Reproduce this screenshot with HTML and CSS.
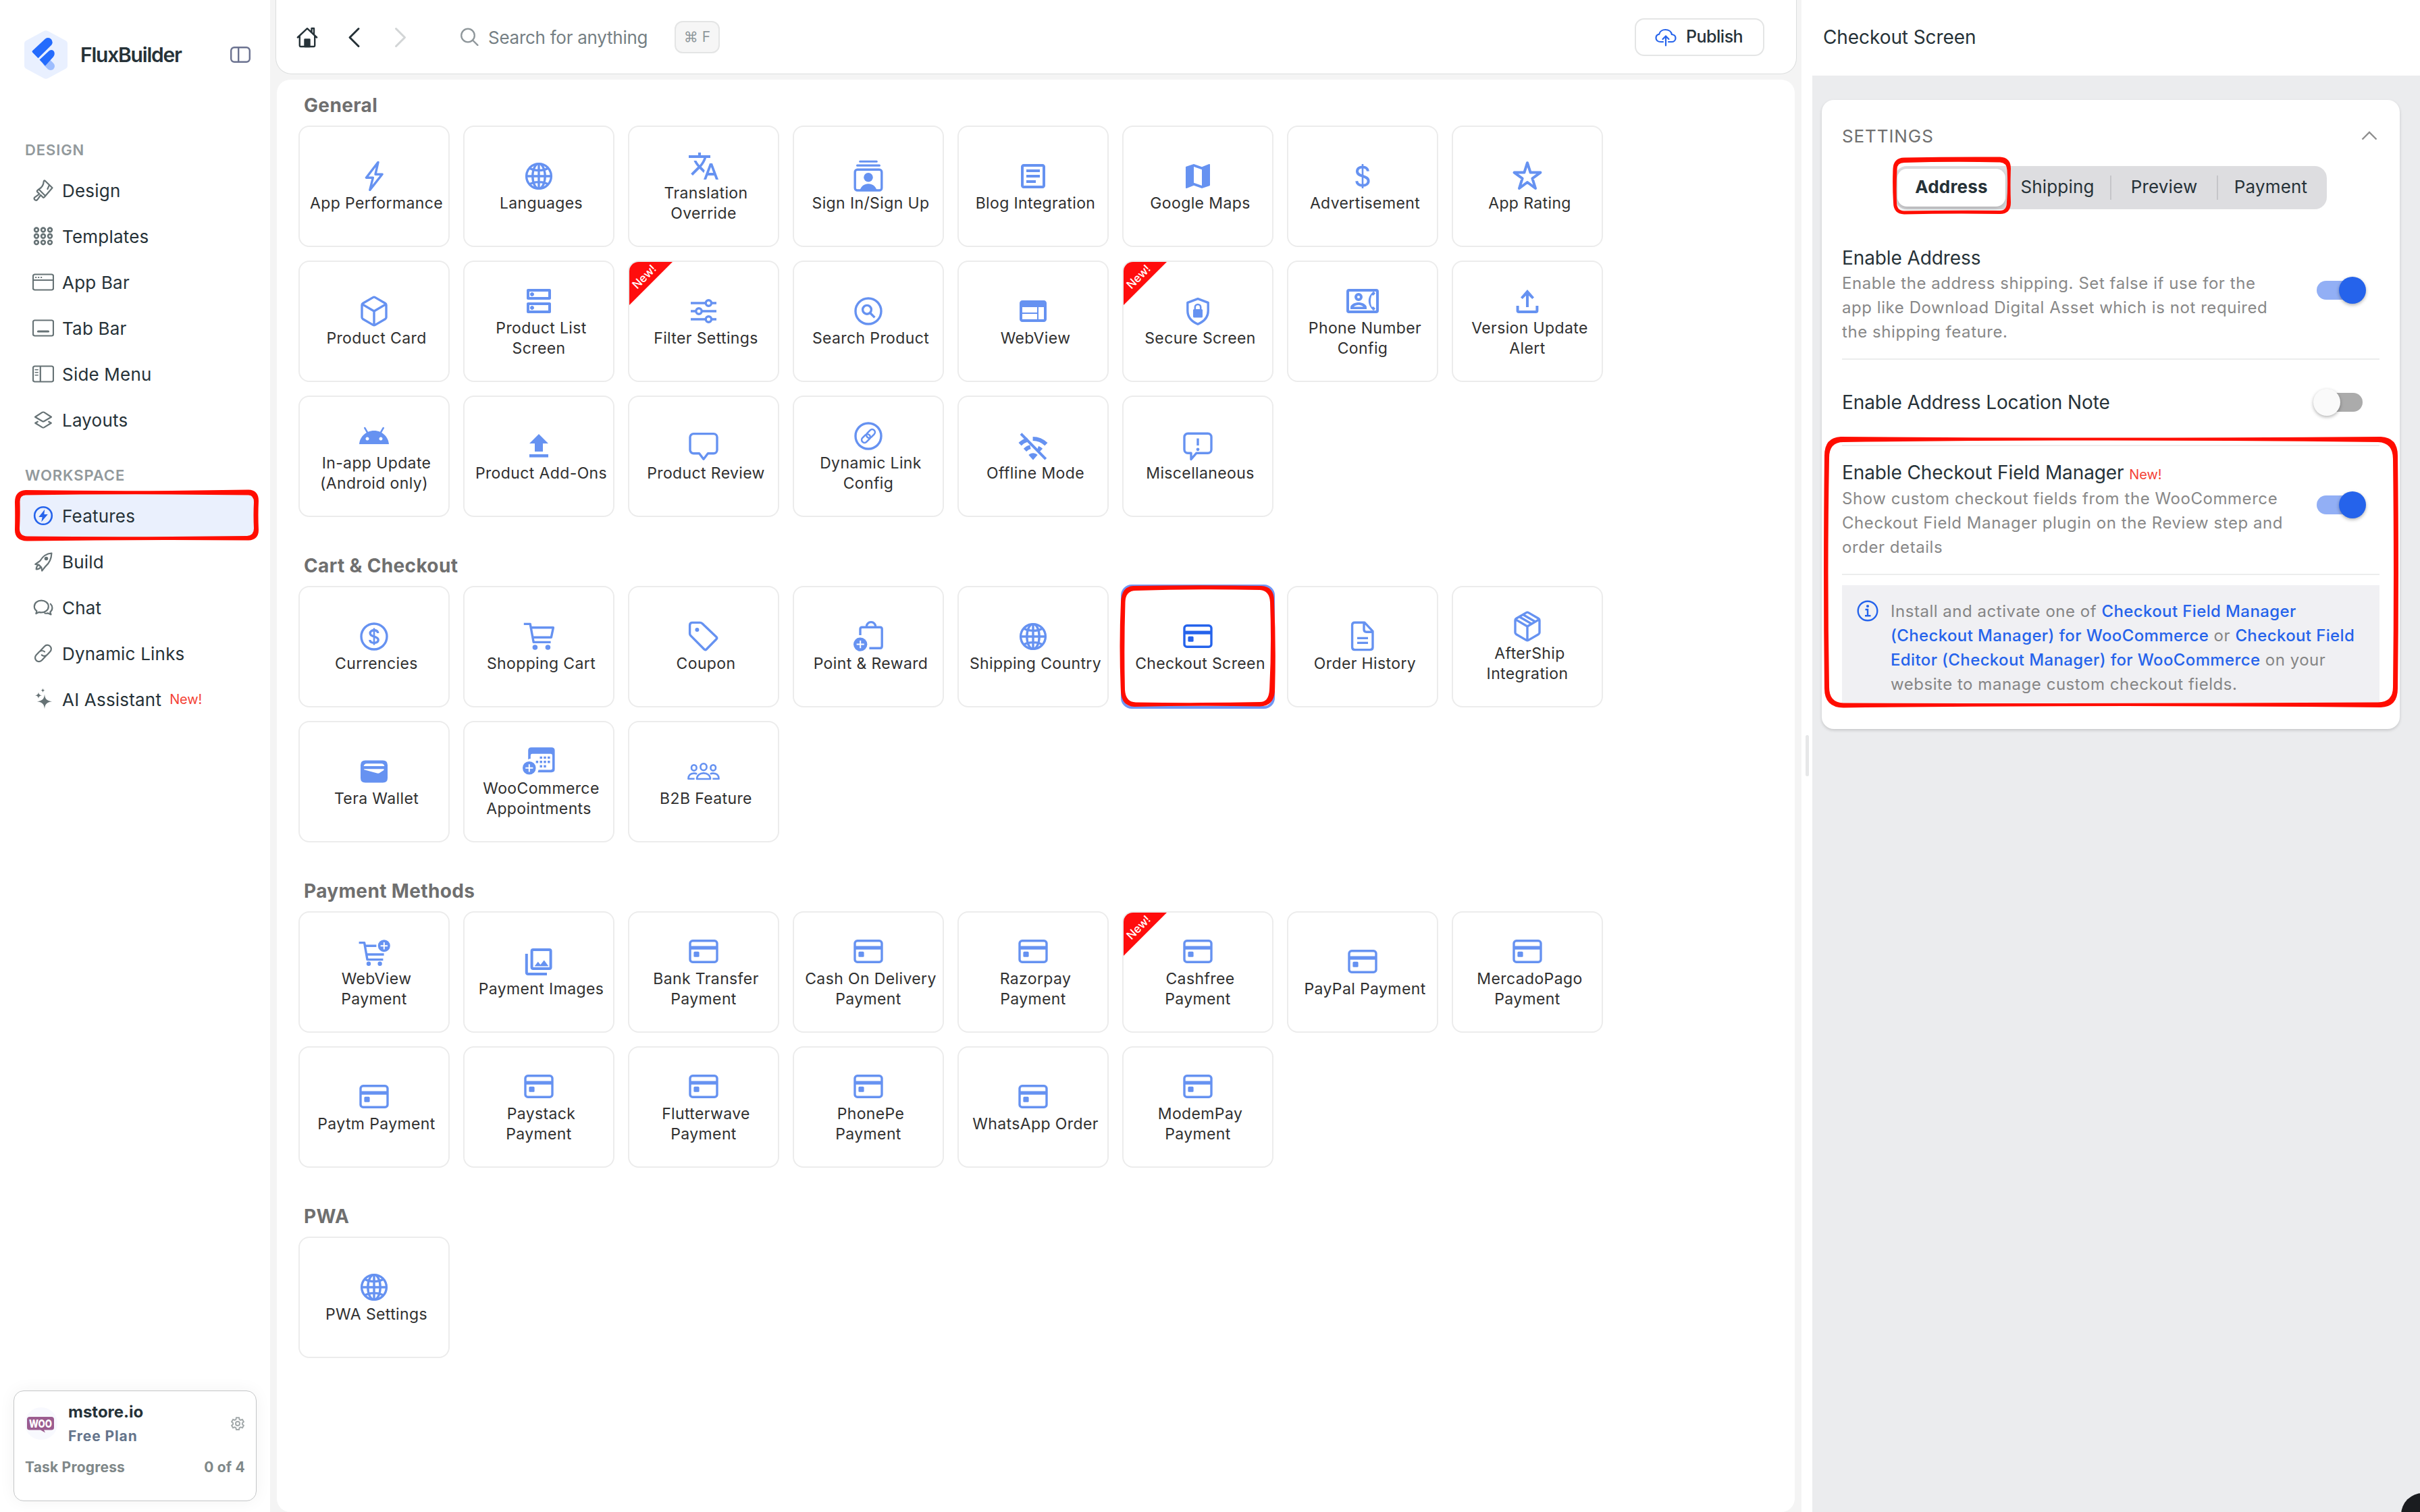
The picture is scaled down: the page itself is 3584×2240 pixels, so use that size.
FILE: index.html
```
<!DOCTYPE html>
<html lang="en">
  <head>
    <meta charset="UTF-8" />
    <meta name="viewport" content="width=device-width, initial-scale=1.0" />
    <title>FluxBuilder</title>
    <link rel="stylesheet" href="styles.css">
  </head>

  <body>
    <!-- icon sprite -->
    <svg width="0" height="0" class="sprite">
      <symbol id="flash" viewBox="0 0 24 24"><path class="s" d="M15 1.7 6.2 13.1h5L8.9 22.2 18 10.6h-5z"/></symbol>
      <symbol id="globe" viewBox="0 0 24 24"><g class="s"><circle cx="12" cy="12" r="9.2"/><ellipse cx="12" cy="12" rx="4.6" ry="9.2"/><path d="M12 2.8v18.4M2.8 12h18.4M5.2 6.1c3.8 2.1 9.8 2.1 13.6 0M5.2 17.9c3.8-2.1 9.8-2.1 13.6 0"/></g></symbol>
      <symbol id="translate" viewBox="0 0 24 24"><path d="M12.87 15.07l-2.54-2.51.03-.03C12.1 10.59 13.34 8.36 14.07 6H17V4h-7V2H8v2H1v2h11.17C11.5 7.92 10.44 9.75 9 11.35 8.07 10.32 7.3 9.19 6.69 8h-2c.73 1.63 1.73 3.17 2.98 4.56l-5.09 5.02L4 19l5-5 3.11 3.11.76-2.04M18.5 10h-2L12 22h2l1.12-3h4.75L21 22h2l-4.5-12m-2.62 7l1.62-4.33L19.12 17h-3.24z"/></symbol>
      <symbol id="signin" viewBox="0 0 24 24"><path d="M6.2.4h11.6a.6.6 0 0 1 .6 1.5H5.6a.6.6 0 0 1 .6-1.5zM4.2 3.3h15.6a.6.6 0 0 1 .6 1.6H3.6a.6.6 0 0 1 .6-1.6z"/><rect class="s" x="2.1" y="7.1" width="19.8" height="15.4" rx="1.8"/><circle cx="12" cy="12.9" r="3.4"/><path d="M5.7 22.6c.8-3.3 3.4-5 6.3-5s5.5 1.7 6.3 5z"/></symbol>
      <symbol id="article" viewBox="0 0 24 24"><path d="M19 5v14H5V5h14m0-2H5c-1.1 0-2 .9-2 2v14c0 1.1.9 2 2 2h14c1.1 0 2-.9 2-2V5c0-1.1-.9-2-2-2zM14 17H7v-2h7v2zm3-4H7v-2h10v2zm0-4H7V7h10v2z"/></symbol>
      <symbol id="map" viewBox="0 0 24 24"><path fill-rule="evenodd" d="M15 19l-6-2.11V5l6 2.11M20.5 3h-.16L15 5.1 9 3 3.36 4.9c-.21.07-.36.25-.36.48V20.5a.5.5 0 0 0 .66.47L9 18.9l6 2.1 5.64-1.9c.21-.1.36-.25.36-.48V3.5a.5.5 0 0 0-.5-.5z"/></symbol>
      <symbol id="dollar" viewBox="0 0 24 24"><path class="s s2" d="M16 8.3c-.2-2-1.8-3.1-4-3.1-2.3 0-4 1.2-4 3.2 0 4.5 8.3 2.6 8.3 7.2 0 2-1.8 3.3-4.3 3.3-2.4 0-4.2-1.2-4.4-3.3"/><path class="s s1" d="M12 3v18"/></symbol>
      <symbol id="star" viewBox="0 0 24 24"><path class="s s2" d="M12 2.1l2.3 7.2h7.4l-6 4.4 2.3 7.3-6-4.5L6 21l2.3-7.3-6-4.4h7.4z"/></symbol>
      <symbol id="cube" viewBox="0 0 24 24"><path class="s" d="M11.2 1.8a1.6 1.6 0 0 1 1.6 0l7.4 4.3a1.6 1.6 0 0 1 .8 1.4v9a1.6 1.6 0 0 1-.8 1.4l-7.4 4.3a1.6 1.6 0 0 1-1.6 0l-7.4-4.3a1.6 1.6 0 0 1-.8-1.4v-9a1.6 1.6 0 0 1 .8-1.4zM3.2 6.8 12 12l8.8-5.2M12 12v10.2"/></symbol>
      <symbol id="list" viewBox="0 0 24 24"><path d="M19 15v4H5v-4h14m1-2H4c-.55 0-1 .45-1 1v6c0 .55.45 1 1 1h16c.55 0 1-.45 1-1v-6c0-.55-.45-1-1-1zM7 18.5c-.82 0-1.5-.67-1.5-1.5s.68-1.5 1.5-1.5 1.5.67 1.5 1.5-.67 1.5-1.5 1.5zM19 5v4H5V5h14m1-2H4c-.55 0-1 .45-1 1v6c0 .55.45 1 1 1h16c.55 0 1-.45 1-1V4c0-.55-.45-1-1-1zM7 8.5c-.82 0-1.5-.67-1.5-1.5S6.18 5.5 7 5.5s1.5.68 1.5 1.5S7.83 8.5 7 8.5z"/></symbol>
      <symbol id="sliders" viewBox="0 0 24 24"><path class="s" d="M2.5 6h10.7M18.2 6h3.3M2.5 12H6M11 12h10.5M2.5 18h10.7M18.2 18h3.3"/><g class="s"><circle cx="15.7" cy="6" r="2.1"/><circle cx="8.5" cy="12" r="2.1"/><circle cx="15.7" cy="18" r="2.1"/></g></symbol>
      <symbol id="find" viewBox="0 0 24 24"><circle class="s" cx="12" cy="12" r="9.5"/><circle class="s" cx="11" cy="10.9" r="3.2"/><path class="s" d="M13.4 13.4l3.3 3.3"/></symbol>
      <symbol id="web" viewBox="0 0 24 24"><path d="M20 4H4c-1.1 0-1.99.9-1.99 2L2 18c0 1.1.9 2 2 2h16c1.1 0 2-.9 2-2V6c0-1.1-.9-2-2-2zm-5 14H4v-4h11v4zm0-5H4V9h11v4zm5 5h-4V9h4v9z"/></symbol>
      <symbol id="shield" viewBox="0 0 24 24"><path class="s" d="M12 2.8l7.6 2.9v6c0 4.7-3.2 8-7.6 9.9-4.4-1.9-7.6-5.2-7.6-9.9v-6z"/><rect x="8.5" y="10.5" width="7" height="6.3" rx=".8"/><path class="s s1" d="M9.9 11V9.1a2.1 2.1 0 0 1 4.2 0V11"/></symbol>
      <symbol id="contact" viewBox="0 0 24 24"><rect class="s s2" x="1" y="4" width="22" height="16" rx=".9"/><circle class="s s2" cx="9" cy="9" r="2"/><path fill-rule="evenodd" d="M3 18v-1.4C3 14.3 6.8 13 9 13s6 1.3 6 3.6V18zM5.5 16.2h7c-.8-.8-2.3-1.3-3.5-1.3s-2.7.5-3.5 1.3zM20.3 7.7l1.2-1.6L20 4.9c-2.3 2-3.6 4.4-3.6 7s1.3 5.1 3.6 7.1l1.5-1.2-1.2-1.6h-1.6c-1-2.7-1-5.5 0-8.4z"/></symbol>
      <symbol id="upload" viewBox="0 0 24 24"><path class="s s2" d="M12 16.5V5M4.8 15.5v3.6q0 .9.9.9h12.6q.9 0 .9-.9v-3.6"/><path d="M12 3.5l5 5.7-1.4 1.3L12 7l-3.6 3.5L7 9.2z"/></symbol>
      <symbol id="android" viewBox="0 0 24 24"><path d="M17.6 9.48l1.84-3.18c.16-.31.04-.69-.26-.85-.29-.15-.65-.06-.83.22l-1.88 3.24c-2.86-1.21-6.08-1.21-8.94 0L5.65 5.67c-.19-.29-.58-.38-.87-.2-.28.18-.37.54-.22.83L6.4 9.48C3.3 11.25 1.28 14.44 1 18h22c-.28-3.56-2.3-6.75-5.4-8.52zM7 15.25c-.69 0-1.25-.56-1.25-1.25s.56-1.25 1.25-1.25 1.25.56 1.25 1.25-.56 1.25-1.25 1.25zm10 0c-.69 0-1.25-.56-1.25-1.25s.56-1.25 1.25-1.25 1.25.56 1.25 1.25-.56 1.25-1.25 1.25z"/></symbol>
      <symbol id="addons" viewBox="0 0 24 24"><path d="M9 16h6v-6h4l-7-7-7 7h4v6zm-4 2h14v2.2H5V18z"/></symbol>
      <symbol id="bubble" viewBox="0 0 24 24"><path class="s" d="M4.6 2.8h14.8A2.6 2.6 0 0 1 22 5.4v9.4a2.6 2.6 0 0 1-2.6 2.6h-4.2L12 21.6l-3.2-4.2H4.6A2.6 2.6 0 0 1 2 14.8V5.4a2.6 2.6 0 0 1 2.6-2.6z"/></symbol>
      <symbol id="dynlink" viewBox="0 0 24 24"><circle class="s" cx="12" cy="12" r="9.5"/><g class="s s1" transform="rotate(-45 12 12)"><rect x="5.9" y="9.9" width="7.2" height="4.2" rx="2.1"/><rect x="10.9" y="9.9" width="7.2" height="4.2" rx="2.1"/></g></symbol>
      <symbol id="offline" viewBox="0 0 24 24"><path class="s s3" d="M2.3 10.6C4 8.9 6 7.8 8 7.2M11.8 6.5c3.8 0 7.2 1.5 9.9 4.1M6 14.9c1.2-1.2 2.5-2 4-2.3M15.5 13.3c1 .4 1.8.9 2.5 1.6"/><path d="M12 22.3l-3.3-3.8c1.9-1.8 4.7-1.8 6.6 0z"/><path class="s s2" d="M3 2.8l18.4 18.8"/></symbol>
      <symbol id="alert" viewBox="0 0 24 24"><path class="s" d="M4.6 2.6h14.8A2.6 2.6 0 0 1 22 5.2v9.3a2.6 2.6 0 0 1-2.6 2.6H11l-4 4.6v-4.6H4.6A2.6 2.6 0 0 1 2 14.5V5.2a2.6 2.6 0 0 1 2.6-2.6z"/><path class="s" d="M12 6.2v5.3"/><circle cx="12" cy="14.4" r="1.2"/></symbol>
      <symbol id="coin" viewBox="0 0 24 24"><circle class="s" cx="12" cy="12" r="9.5"/><path class="s" d="M14.9 9.5c-.1-1.4-1.3-2.1-2.9-2.1s-2.9.8-2.9 2.2c0 3.2 6 1.7 6 4.9 0 1.4-1.4 2.2-3.1 2.2s-3-.7-3.1-2.2"/><path class="s s1" d="M12 5.8v12.4"/></symbol>
      <symbol id="cart" viewBox="0 0 24 24"><path class="s" d="M.9 2.7h4.7l2.5 13.5h12.7M6.2 5.4h16.5l-1.5 7.2H7.5"/><circle cx="9.2" cy="20" r="1.9"/><circle cx="18.7" cy="20" r="1.9"/></symbol>
      <symbol id="tag" viewBox="0 0 24 24"><path class="s" d="M3.7 1.7h5.7q.9 0 1.5.6l10.5 9.9q.9.9 0 1.8l-7.2 7.4q-.9.9-1.8 0L2.4 11.3q-.6-.6-.6-1.5V3.6q0-1.9 1.9-1.9z"/><circle cx="7.2" cy="7" r="1.5"/></symbol>
      <symbol id="bag" viewBox="0 0 24 24"><path class="s" d="M6 11V6.5Q6 5.1 7.4 5.1h13.3q1.4 0 1.4 1.4v12.6q0 1.5-1.4 1.5h-8M10.6 5V4.7a3.4 3.4 0 0 1 6.8 0V5"/><circle cx="6.1" cy="17.8" r="5.1"/><path stroke="#fff" stroke-width="1" d="M6.1 15v5.6M3.3 17.8h5.6"/></symbol>
      <symbol id="card" viewBox="0 0 24 24"><rect class="s" x="2" y="3.9" width="20" height="15.7" rx="1.9"/><path d="M1.8 7.7h20.4v2.7H1.8z"/><rect x="4.7" y="11.9" width="4.1" height="4" rx=".8"/></symbol>
      <symbol id="doc" viewBox="0 0 24 24"><path class="s" d="M6.2 1.6h7.2l6.1 6.5v11.8q0 1.9-1.9 1.9H6.2q-1.9 0-1.9-1.9V3.5q0-1.9 1.9-1.9zM13 1.8v5q0 1.8 1.8 1.8h4.7M8 13.2h8M8 16.7h8"/></symbol>
      <symbol id="parcel" viewBox="0 0 24 24"><path class="s" d="M11.2 1.8a1.6 1.6 0 0 1 1.6 0l7.4 4.3a1.6 1.6 0 0 1 .8 1.4v9a1.6 1.6 0 0 1-.8 1.4l-7.4 4.3a1.6 1.6 0 0 1-1.6 0l-7.4-4.3a1.6 1.6 0 0 1-.8-1.4v-9a1.6 1.6 0 0 1 .8-1.4zM3.2 6.8 12 12l8.8-5.2M12 12v10.2M6.3 5l9 5.2M9 3.4l9 5.2"/></symbol>
      <symbol id="wallet" viewBox="0 0 24 24"><path fill-rule="evenodd" d="M5.5 3.7h13q3.5 0 3.5 3.5v9.6q0 3.5-3.5 3.5h-13Q2 20.3 2 16.8V7.2q0-3.5 3.5-3.5zM4.3 8h15.4q-.4-1.9-2.3-1.9H6.6Q4.7 6.1 4.3 8zM4.6 10.6l8.7 2.4q2 .8 3-.1l2.9-1.9.1-.9H4.6z"/></symbol>
      <symbol id="calendar" viewBox="0 0 24 24"><path fill-rule="evenodd" d="M6.4 1.6h15q2.4 0 2.4 2.3v13.9q0 2.3-2.4 2.3H11.2l.6-1.8h9q1.2 0 1.2-1.2V7.6q0-1.2-1.2-1.2H7.1q-1.2 0-1.2 1.2V10q-1 0-1.8.6V3.9q0-2.3 2.3-2.3z"/><path class="dots" d="M13.6 9.2h.01M16.5 9.2h.01M19.4 9.2h.01M10.7 12.4h.01M13.6 12.4h.01M16.5 12.4h.01M19.4 12.4h.01M13.6 15.6h.01M16.5 15.6h.01"/><circle cx="4.9" cy="16.9" r="4.9"/><path stroke="#fff" stroke-width="1" d="M4.9 14.1v5.6M2.1 16.9h5.6"/></symbol>
      <symbol id="people" viewBox="0 0 24 24"><g class="s s1"><ellipse cx="12" cy="8.6" rx="2.3" ry="2.5"/><ellipse cx="4.9" cy="9.2" rx="1.9" ry="2.1"/><ellipse cx="19.1" cy="9.2" rx="1.9" ry="2.1"/><path d="M7 17.5c0-2.7 2.2-4.3 5-4.3s5 1.6 5 4.3zM5.3 17.4H.7c0-2.6 1.6-4.1 4.2-4.1.9 0 1.6.2 2.2.5M18.7 17.4h4.6c0-2.6-1.6-4.1-4.2-4.1-.9 0-1.6.2-2.2.5"/></g></symbol>
      <symbol id="cartplus" viewBox="0 0 24 24"><path class="s" d="M.8 5.3h4l2.2 12.5h11.7M5.4 7.6h8.3M6.5 14h12.8"/><circle cx="8" cy="20.9" r="1.6"/><circle cx="16.3" cy="20.9" r="1.6"/><circle cx="19.4" cy="7.6" r="4.5"/><path stroke="#fff" stroke-width="1" d="M19.4 5v5.2M16.8 7.6H22"/></symbol>
      <symbol id="images" viewBox="0 0 24 24"><rect class="s s2" x="6.8" y="3" width="14" height="14" rx="1"/><path class="s s2" d="M2.9 6v13.8q0 1.2 1.2 1.2H18"/><path d="M8.8 15.2l2.6-3.3 1.8 2.2 2.7-3.4 3.3 4.5z"/></symbol>

      <symbol id="brush" viewBox="0 0 32 32"><path class="n" d="M18.6 1.7 29.5 12.3 19.2 24.2 9.5 14.5c4.2-2.6 7-6.7 7.2-11.4q.2-2.3 1.9-1.4zM9.4 14.4l-2.2 2q-.8 1 .2 2l3 2.9-7 5q-1.6 1.7 0 3.6 2 1.7 3.9 0l5-6.9 3.2 3.2q1 1 1.9.1l1.9-2.1M22.4 14l2.4-5.4"/></symbol>
      <symbol id="grid9" viewBox="0 0 32 32"><g class="n n2"><circle cx="6" cy="6.5" r="2.9"/><circle cx="16" cy="6.5" r="2.9"/><circle cx="26" cy="6.5" r="2.9"/><circle cx="6" cy="15.8" r="2.9"/><circle cx="16" cy="15.8" r="2.9"/><circle cx="26" cy="15.8" r="2.9"/><circle cx="6" cy="25.1" r="2.9"/><circle cx="16" cy="25.1" r="2.9"/><circle cx="26" cy="25.1" r="2.9"/></g></symbol>
      <symbol id="appbar" viewBox="0 0 32 32"><path class="n" d="M3.5 4.5h25A2.5 2.5 0 0 1 31 7v18a2.5 2.5 0 0 1-2.5 2.5h-25A2.5 2.5 0 0 1 1 25V7a2.5 2.5 0 0 1 2.5-2.5zM1 13h30"/><path d="M4.2 7.9h2v2h-2zM8.2 7.9h2v2h-2zM12.2 7.9h2v2h-2z"/></symbol>
      <symbol id="tabbar" viewBox="0 0 32 32"><rect class="n" x="1" y="4.5" width="30" height="23" rx="2.5"/><path class="n n3" d="M8.5 21h15"/></symbol>
      <symbol id="sidemenu" viewBox="0 0 32 32"><path class="n" d="M3.5 4.5h25A2.5 2.5 0 0 1 31 7v18a2.5 2.5 0 0 1-2.5 2.5h-25A2.5 2.5 0 0 1 1 25V7a2.5 2.5 0 0 1 2.5-2.5zM11.8 4.5v23"/><path class="n n1" d="M4.2 9.7h4M4.2 13.7h4M4.2 17.7h4"/></symbol>
      <symbol id="layers" viewBox="0 0 32 32"><path class="n" d="M14.6 4.9q1.4-.8 2.8 0L28 11.7 17.4 18q-1.4.8-2.8 0L4 11.7zM7.8 18.7 4.2 20.8l10.4 6.3q1.4.8 2.8 0l10.4-6.3-3.6-2.1"/></symbol>
      <symbol id="bolt" viewBox="0 0 32 32"><circle class="n n2" cx="16" cy="16" r="12.8"/><path d="M18.2 6.8 9.3 18h5.3l-1.3 7.3L22.8 14h-5.4z"/></symbol>
      <symbol id="rocket" viewBox="0 0 32 32"><path class="n" d="M28.4 3.5c-7.7.6-13.3 5-17 11.3L4.3 20l5 .6 4 4 .9 5 5.4-6.8c5.4-4.6 8.5-10.8 8.8-19.3zM9.4 20.8q-3.4 1.6-3.7 6.6 4.7-.3 6.7-3.3"/><circle cx="20.5" cy="11.5" r="2.8"/></symbol>
      <symbol id="chat" viewBox="0 0 32 32"><path class="n" d="M13.2 5.6c5.8 0 10.6 3.8 10.6 8.9s-4.8 8.9-10.6 8.9c-1.3 0-2.6-.2-3.7-.5L5.4 25l1-3.8C4.2 19.6 2.8 17.2 2.8 14.5c0-5.1 4.6-8.9 10.4-8.9zM26.8 10.7c1.7 1.5 2.6 3.6 2.6 5.9 0 2.5-1.2 4.7-3.1 6.2l1.2 3.6-4.3-2c-1.5.4-3.2.5-4.8.1"/></symbol>
      <symbol id="chain" viewBox="0 0 32 32"><g class="n" transform="rotate(-47 16 16)"><path d="M17 21.5H7a5.7 5.7 0 0 1 0-11.4h6.5a5.7 5.7 0 0 1 5.7 5.7M15 10.3h10a5.7 5.7 0 0 1 0 11.4h-6.5a5.7 5.7 0 0 1-5.7-5.7"/></g></symbol>
      <symbol id="sparkle" viewBox="0 0 32 32"><path d="M18 8.5c.8 7 2.6 9.3 11 10.8-8.4 1.5-10.2 3.9-11 10.9-.8-7-2.6-9.4-11-10.9 8.4-1.5 10.2-3.8 11-10.8zM9 5.5c.5 3.2 1.5 4.2 5 4.7-3.5.5-4.5 1.6-5 4.8-.5-3.2-1.5-4.3-5-4.8 3.5-.5 4.5-1.5 5-4.7zM15.5-.5c.3 2.2 1 2.9 3.3 3.2-2.3.4-3 1-3.3 3.2-.4-2.2-1-2.8-3.3-3.2 2.3-.3 2.9-1 3.3-3.2z"/></symbol>
    </svg>

    <aside class="sidebar">
      <div class="brand">
        <svg class="logo" viewBox="0 0 64 72">
          <path fill="#e9f0ff" d="M28.5 1.2q3.5-2 7 0L61 15q3 1.6 3 5v32q0 3.4-3 5L35.5 70.8q-3.5 2-7 0L3 57q-3-1.6-3-5V20q0-3.4 3-5z"/>
          <path stroke="#9dbdff" stroke-width="12" stroke-linecap="round" d="M33 47l6 6"/>
          <path fill="#246bfd" d="M12 32.5q-1-1.2 0-2.2L31 12.5q5-3.3 9 .8 3.2 4.5.2 8.5L20.5 41.3zM22.5 43.5l14.5-13.5q4.5-2.3 7 1.2 2 4-1 8L31 52.5z"/>
        </svg>
        <span class="brand-name">FluxBuilder</span>
        <svg class="collapse" viewBox="0 0 30 24"><path d="M6 1.2h18A4.8 4.8 0 0 1 28.8 6v12a4.8 4.8 0 0 1-4.8 4.8H6A4.8 4.8 0 0 1 1.2 18V6A4.8 4.8 0 0 1 6 1.2zM12.2 1.2v21.6"/></svg>
      </div>

      <div class="nav-title">DESIGN</div>
      <a class="nav-item"><svg><use href="#brush"/></svg>Design</a>
      <a class="nav-item"><svg><use href="#grid9"/></svg>Templates</a>
      <a class="nav-item"><svg><use href="#appbar"/></svg>App Bar</a>
      <a class="nav-item"><svg><use href="#tabbar"/></svg>Tab Bar</a>
      <a class="nav-item"><svg><use href="#sidemenu"/></svg>Side Menu</a>
      <a class="nav-item"><svg><use href="#layers"/></svg>Layouts</a>

      <div class="nav-title workspace">WORKSPACE</div>
      <a class="nav-item active"><svg><use href="#bolt"/></svg>Features</a>
      <a class="nav-item"><svg><use href="#rocket"/></svg>Build</a>
      <a class="nav-item"><svg><use href="#chat"/></svg>Chat</a>
      <a class="nav-item"><svg><use href="#chain"/></svg>Dynamic Links</a>
      <a class="nav-item"><svg><use href="#sparkle"/></svg>AI Assistant <span class="new">New!</span></a>

      <div class="site-card">
        <div class="site-row">
          <div class="site-logo">
            <svg viewBox="0 0 40 24"><path fill="#9b5c8f" d="M4 0h32q4 0 4 4v12q0 3.5-4 3.5H25l2 4-7-4H4q-4 0-4-3.5V4q0-4 4-4z"/><text x="20" y="15.6" text-anchor="middle" textLength="34" lengthAdjust="spacingAndGlyphs">WOO</text></svg>
          </div>
          <div class="site-info">
            <div class="site-name">mstore.io</div>
            <div class="site-plan">Free Plan</div>
          </div>
          <svg class="gear" viewBox="0 0 20 20"><path d="M8 1.2h4l.6 2.6 1.7 1 2.6-.8 2 3.4-2 1.8v1.8l2 1.8-2 3.4-2.6-.8-1.7 1-.6 2.5H8l-.6-2.5-1.7-1-2.6.8-2-3.4 2-1.8V9.2l-2-1.8 2-3.4 2.6.8 1.7-1z"/><circle cx="10" cy="10" r="3"/></svg>
        </div>
        <div class="site-progress"><span>Task Progress</span><span>0 of 4</span></div>
      </div>
    </aside>

    <main class="main">
      <header class="toolbar">
        <svg class="tool home" viewBox="0 0 32 32"><path d="M1.8 16.5 16 3.2l14.2 13.3M4.8 14v14.3q0 1.7 1.7 1.7h19q1.7 0 1.7-1.7V14M22.5 8.5V3H26v9"/><path class="door" d="M12.5 30V19.5h7V30z"/></svg>
        <svg class="tool" viewBox="0 0 32 32"><path d="M23 3.5 10 16.5 23 29.5"/></svg>
        <svg class="tool off" viewBox="0 0 32 32"><path d="M9.5 3.5l13 13-13 13"/></svg>
        <svg class="search-icon" viewBox="0 0 28 28"><circle cx="12" cy="11.5" r="9.8"/><path d="M19.2 18.7l7.2 7.2"/></svg>
        <span class="search-text">Search for anything</span>
        <kbd>⌘ F</kbd>
        <button class="publish">
          <svg viewBox="0 0 32 28"><path d="M12 20H8.5C4.5 20 1.5 17.7 1.5 14.2c0-3 2-5 4.7-5.6C7 4.7 10.8 2 15.5 2c4.8 0 8.6 2.7 9.4 7 3.3.3 5.6 2.4 5.6 5.4 0 3.3-2.6 5.6-6 5.6H20M16 25.5V12M11.5 16l4.5-4.5 4.5 4.5"/></svg>
          Publish
        </button>
      </header>

      <div class="panel">
        <section>
          <h2>General</h2>
          <div class="grid">
            <div class="card"><svg><use href="#flash"/></svg><p>App Performance</p></div>
            <div class="card"><svg><use href="#globe"/></svg><p>Languages</p></div>
            <div class="card"><svg><use href="#translate"/></svg><p>Translation<br>Override</p></div>
            <div class="card"><svg><use href="#signin"/></svg><p>Sign In/Sign Up</p></div>
            <div class="card"><svg><use href="#article"/></svg><p>Blog Integration</p></div>
            <div class="card"><svg><use href="#map"/></svg><p>Google Maps</p></div>
            <div class="card"><svg><use href="#dollar"/></svg><p>Advertisement</p></div>
            <div class="card"><svg><use href="#star"/></svg><p>App Rating</p></div>
            <div class="card"><svg><use href="#cube"/></svg><p>Product Card</p></div>
            <div class="card"><svg><use href="#list"/></svg><p>Product List<br>Screen</p></div>
            <div class="card"><div class="ribbon"><span>New!</span></div><svg><use href="#sliders"/></svg><p>Filter Settings</p></div>
            <div class="card"><svg><use href="#find"/></svg><p>Search Product</p></div>
            <div class="card"><svg><use href="#web"/></svg><p>WebView</p></div>
            <div class="card"><div class="ribbon"><span>New!</span></div><svg><use href="#shield"/></svg><p>Secure Screen</p></div>
            <div class="card"><svg><use href="#contact"/></svg><p>Phone Number<br>Config</p></div>
            <div class="card"><svg><use href="#upload"/></svg><p>Version Update<br>Alert</p></div>
            <div class="card"><svg><use href="#android"/></svg><p>In-app Update<br>(Android only)</p></div>
            <div class="card"><svg><use href="#addons"/></svg><p>Product Add-Ons</p></div>
            <div class="card"><svg><use href="#bubble"/></svg><p>Product Review</p></div>
            <div class="card"><svg><use href="#dynlink"/></svg><p>Dynamic Link<br>Config</p></div>
            <div class="card"><svg><use href="#offline"/></svg><p>Offline Mode</p></div>
            <div class="card"><svg><use href="#alert"/></svg><p>Miscellaneous</p></div>
          </div>
        </section>

        <section>
          <h2>Cart &amp; Checkout</h2>
          <div class="grid">
            <div class="card"><svg><use href="#coin"/></svg><p>Currencies</p></div>
            <div class="card"><svg><use href="#cart"/></svg><p>Shopping Cart</p></div>
            <div class="card"><svg><use href="#tag"/></svg><p>Coupon</p></div>
            <div class="card"><svg><use href="#bag"/></svg><p>Point &amp; Reward</p></div>
            <div class="card"><svg><use href="#globe"/></svg><p>Shipping Country</p></div>
            <div class="card selected"><svg><use href="#card"/></svg><p>Checkout Screen</p></div>
            <div class="card"><svg><use href="#doc"/></svg><p>Order History</p></div>
            <div class="card"><svg><use href="#parcel"/></svg><p>AfterShip<br>Integration</p></div>
            <div class="card"><svg><use href="#wallet"/></svg><p>Tera Wallet</p></div>
            <div class="card"><svg><use href="#calendar"/></svg><p>WooCommerce<br>Appointments</p></div>
            <div class="card"><svg><use href="#people"/></svg><p>B2B Feature</p></div>
          </div>
        </section>

        <section>
          <h2>Payment Methods</h2>
          <div class="grid">
            <div class="card"><svg><use href="#cartplus"/></svg><p>WebView<br>Payment</p></div>
            <div class="card"><svg><use href="#images"/></svg><p>Payment Images</p></div>
            <div class="card"><svg><use href="#card"/></svg><p>Bank Transfer<br>Payment</p></div>
            <div class="card"><svg><use href="#card"/></svg><p>Cash On Delivery<br>Payment</p></div>
            <div class="card"><svg><use href="#card"/></svg><p>Razorpay<br>Payment</p></div>
            <div class="card"><div class="ribbon"><span>New!</span></div><svg><use href="#card"/></svg><p>Cashfree<br>Payment</p></div>
            <div class="card"><svg><use href="#card"/></svg><p>PayPal Payment</p></div>
            <div class="card"><svg><use href="#card"/></svg><p>MercadoPago<br>Payment</p></div>
            <div class="card"><svg><use href="#card"/></svg><p>Paytm Payment</p></div>
            <div class="card"><svg><use href="#card"/></svg><p>Paystack<br>Payment</p></div>
            <div class="card"><svg><use href="#card"/></svg><p>Flutterwave<br>Payment</p></div>
            <div class="card"><svg><use href="#card"/></svg><p>PhonePe<br>Payment</p></div>
            <div class="card"><svg><use href="#card"/></svg><p>WhatsApp Order</p></div>
            <div class="card"><svg><use href="#card"/></svg><p>ModemPay<br>Payment</p></div>
          </div>
        </section>

        <section>
          <h2>PWA</h2>
          <div class="grid">
            <div class="card"><svg><use href="#globe"/></svg><p>PWA Settings</p></div>
          </div>
        </section>
      </div>
    </main>

    <aside class="inspector">
      <div class="inspector-title">Checkout Screen</div>
      <div class="inspector-body">
        <div class="resizer"></div>
        <div class="inspector-content">
          <div class="settings">
            <div class="settings-head">
              <span>SETTINGS</span>
              <svg viewBox="0 0 24 14"><path d="M1.5 12.5 12 2l10.5 10.5"/></svg>
            </div>
            <div class="segmented">
              <span class="seg on">Address</span>
              <span class="seg">Shipping</span>
              <span class="seg">Preview</span>
              <span class="seg">Payment</span>
            </div>

            <div class="option first">
              <div>
                <div class="option-title">Enable Address</div>
                <div class="option-desc">Enable the address shipping. Set false if use for the<br>app like Download Digital Asset which is not required<br>the shipping feature.</div>
              </div>
              <div class="switch on"><i></i></div>
            </div>

            <div class="option single">
              <div class="option-title">Enable Address Location Note</div>
              <div class="switch"><i></i></div>
            </div>

            <div class="option">
              <div>
                <div class="option-title">Enable Checkout Field Manager <span class="new">New!</span></div>
                <div class="option-desc">Show custom checkout fields from the WooCommerce<br>Checkout Field Manager plugin on the Review step and<br>order details</div>
              </div>
              <div class="switch on"><i></i></div>
            </div>

            <div class="note">
              <svg viewBox="0 0 32 32"><circle cx="16" cy="16" r="14.3"/><path d="M12.5 14H16v9M12 23.2h8.5"/><circle class="dot" cx="16" cy="9" r="2.1"/></svg>
              <p>Install and activate one of <a>Checkout Field Manager<br>(Checkout Manager) for WooCommerce</a> or <a>Checkout Field<br>Editor (Checkout Manager) for WooCommerce</a> on your<br>website to manage custom checkout fields.</p>
            </div>
          </div>
        </div>
      </div>
    </aside>

    <div class="help"></div>

    <!-- red marker outlines -->
    <svg class="marks" viewBox="0 0 3584 2240">
      <path d="M38 726Q200 728.5 368 725.5Q383 726 383 742Q382 763 383 785Q383 800 368 800.5Q200 799 40 801.5Q22 801 22 785Q22.5 763 22 744Q22 727 38 726ZM38 733.5Q29 734 29.5 744Q30 763 29 783Q29 794 40 794.5Q200 796 366 794Q376 793 376 783Q375 763 376 744Q376 734 368 733.5Q200 731 38 733.5Z"/>
      <path d="M1678 868Q1775 866.5 1868 868Q1887 869 1887 890Q1890 957 1888 1025Q1886 1046 1866 1046.5Q1775 1045 1680 1047Q1661 1046 1660 1025Q1657 957 1660 892Q1661 869 1678 868ZM1682 875Q1667 875 1666.5 892Q1664.5 957 1666 1022Q1667 1040 1682 1040.5Q1775 1042 1866 1040Q1879 1040 1880 1022Q1883.5 957 1881 892Q1880 875 1866 874Q1775 872 1682 875Z"/>
      <path d="M2820 233.5Q2890 232 2962 232.5Q2978 233 2978 250Q2977 275 2978 300Q2978 317 2962 317Q2890 316 2820 317.5Q2804 317 2804 300Q2802.5 275 2803.5 250Q2804 234 2820 233.5ZM2820 241Q2809 241 2809.5 252Q2808 275 2809 300Q2809 312 2820 312.5Q2890 311.5 2962 312Q2972 312 2972 300Q2974 275 2972.5 252Q2972 241 2962 240.5Q2890 239 2820 241Z"/>
      <path d="M2726 647Q3120 650 3526 647Q3551 648 3551 675Q3553 850 3551 1020Q3551 1047 3526 1048Q3120 1044 2730 1048.5Q2702 1048 2702 1020Q2700 850 2702 675Q2702 648 2726 647ZM2730 655Q2709 655 2709 678Q2706 850 2709 1018Q2709 1041 2730 1041.5Q3120 1043 3522 1040.5Q3544 1040 3544 1018Q3546 850 3544 680Q3544 656 3522 655Q3120 650 2730 655Z"/>
    </svg>
  </body>
</html>
```
FILE: styles.css
```
* {
  box-sizing: border-box;
}

body {
  margin: 0;
  height: 2240px;
  display: flex;
  overflow: hidden;
  background-color: #f4f4f4;
  color: #263238;
  font-family: Inter, sans-serif;
  font-size: 26px;
}

h2,
p {
  margin: 0;
}

.sprite {
  position: absolute;
}

/* stroke styles used inside the symbols */
.s,
.n {
  fill: none;
  stroke: currentColor;
  stroke-width: 1.7;
  stroke-linejoin: round;
}

.s1 {
  stroke-width: 1.3;
}

.s2 {
  stroke-width: 2;
}

.s3 {
  stroke-width: 3;
}

.dots {
  stroke: currentColor;
  stroke-width: 1.7;
  stroke-linecap: square;
}

.n {
  stroke-width: 2.2;
  stroke-linecap: round;
}

.n1 {
  stroke-width: 1.6;
}

.n2 {
  stroke-width: 2.6;
}

.n3 {
  stroke-width: 3.2;
}

.new {
  color: #f44336;
  font-size: 20px;
  letter-spacing: -0.1px;
}

/* sidebar */
.sidebar {
  width: 400px;
  display: flex;
  flex-direction: column;
  background-color: #fff;
}

.brand {
  display: flex;
  align-items: center;
  height: 72px;
  margin: 45px 29px 90px 36px;
}

.logo {
  width: 64px;
  height: 72px;
}

.brand-name {
  margin-left: 19px;
  font-size: 30px;
  font-weight: 600;
  letter-spacing: -1.22px;
}

.collapse {
  width: 30px;
  height: 24px;
  margin-left: auto;
  fill: none;
  stroke: #6b7290;
  stroke-width: 2.4;
}

.nav-title {
  margin: 0 0 11px 37px;
  font-size: 22px;
  font-weight: 600;
  line-height: 30px;
  letter-spacing: 0.9px;
  color: #92999c;
}

.nav-title.workspace {
  margin-top: 33px;
}

.nav-item {
  display: flex;
  align-items: center;
  height: 68px;
  padding-left: 48px;
  letter-spacing: 0.2px;
}

.nav-item svg {
  width: 32px;
  height: 32px;
  margin-right: 12px;
  color: #667275;
  fill: currentColor;
  overflow: visible;
}

.nav-item .new {
  margin-left: 12px;
}

.nav-item.active {
  margin: 0 20px 0 24px;
  padding-left: 24px;
  border-radius: 14px;
  background-color: #eaf0fd;
}

.nav-item.active svg {
  color: #2563eb;
}

.site-card {
  height: 164px;
  margin: auto 20px 16px;
  padding: 17px 16px 0;
  border: 1px solid #c4c6c7;
  border-radius: 15px;
  box-shadow: 0 0 24px rgba(0, 0, 0, 0.05);
}

.site-row {
  display: flex;
  align-items: center;
  height: 62px;
}

.site-logo {
  display: flex;
  justify-content: center;
  width: 48px;
  height: 48px;
  padding-top: 14px;
  border-radius: 50%;
  background-color: #f8f9fe;
}

.site-logo svg {
  width: 40px;
  height: 24px;
  margin-left: -2px;
  overflow: visible;
}

.site-logo text {
  font-size: 16px;
  font-weight: 800;
  fill: #fff;
}

.site-info {
  margin-left: 16px;
}

.site-name {
  font-size: 24px;
  font-weight: 700;
  line-height: 30px;
  padding-bottom: 8px;
}

.site-plan {
  font-size: 21px;
  font-weight: 700;
  line-height: 26px;
  letter-spacing: 0.9px;
  color: #64748b;
}

.gear {
  width: 20px;
  height: 20px;
  margin-left: auto;
  margin-right: 1px;
  fill: none;
  stroke: #a3a9ab;
  stroke-width: 2;
}

.site-progress {
  display: flex;
  justify-content: space-between;
  margin-top: 19px;
  font-size: 21px;
  font-weight: 700;
  line-height: 30px;
  letter-spacing: 0.2px;
  color: #7f8889;
}

/* toolbar */
.main {
  width: 2253px;
  margin-left: 8px;
  display: flex;
  flex-direction: column;
}

.toolbar {
  display: flex;
  align-items: center;
  height: 110px;
  padding: 0 47px 0 30px;
  border: 1px solid #dcdede;
  border-top: none;
  border-radius: 0 0 24px 24px;
  background-color: #fff;
}

.tool {
  width: 32px;
  height: 32px;
  margin-right: 37px;
  fill: none;
  stroke: #263238;
  stroke-width: 3;
  stroke-linecap: round;
  stroke-linejoin: round;
}

.tool.home {
  stroke-width: 2.4;
}

.tool .door {
  fill: #263238;
}

.tool.off {
  stroke: #d2d5d6;
  margin-right: 72px;
}

.search-icon {
  width: 28px;
  height: 28px;
  fill: none;
  stroke: #8e969a;
  stroke-width: 2.3;
  stroke-linecap: round;
}

.search-text {
  width: 276px;
  padding-top: 2px;
  margin-left: 14px;
  letter-spacing: -0.26px;
  color: #757f84;
}

kbd {
  display: flex;
  align-items: center;
  justify-content: center;
  width: 67px;
  height: 48px;
  border: 2px solid #e4e5e5;
  border-radius: 12px;
  background-color: #f6f6f6;
  color: #8f989c;
  font-family: Inter, "DejaVu Sans", sans-serif;
  font-size: 21px;
}

.publish {
  display: flex;
  align-items: center;
  width: 192px;
  height: 56px;
  margin-left: auto;
  padding: 0 0 2px 28px;
  border: 2px solid #e4e5e5;
  border-radius: 14px;
  background-color: #fff;
  color: #263238;
  font-family: inherit;
  font-size: 25px;
  font-weight: 500;
  letter-spacing: -0.5px;
}

.publish svg {
  width: 32px;
  height: 28px;
  margin: 4px 14px 0 0;
  fill: none;
  stroke: #2563eb;
  stroke-width: 2.2;
  stroke-linecap: round;
}

/* feature cards */
.panel {
  flex: 1;
  margin: 8px 3px 0 2px;
  padding: 8px 32px 0;
  border-radius: 20px;
  background-color: #fff;
}

h2 {
  padding-left: 8px;
  font-size: 28px;
  font-weight: 700;
  line-height: 60px;
  letter-spacing: 0.35px;
  color: #6f6f6f;
}

.grid {
  display: grid;
  grid-template-columns: repeat(8, 224px);
  grid-auto-rows: 180px;
  gap: 20px;
  margin-bottom: 42px;
}

.card {
  position: relative;
  display: flex;
  flex-direction: column;
  align-items: center;
  justify-content: center;
  border: 2px solid #ececec;
  border-radius: 16px;
  overflow: hidden;
}

.card svg {
  width: 48px;
  height: 48px;
  color: #6692f1;
  fill: currentColor;
}

.card p {
  padding-top: 1px;
  font-size: 23px;
  line-height: 30px;
  letter-spacing: 0.38px;
  text-align: center;
  text-indent: 7px;
  white-space: nowrap;
  color: #303030;
}

.card.selected {
  margin: -2px;
  border: 4px solid #7096f4;
}

.card.selected svg {
  color: #2563eb;
}

.ribbon {
  position: absolute;
  top: 0;
  left: 0;
  width: 64px;
  height: 64px;
  background-color: #ff0d0d;
  clip-path: polygon(0 0, 100% 0, 0 100%);
}

.ribbon span {
  position: absolute;
  top: 11px;
  left: -8px;
  width: 60px;
  text-align: center;
  font-size: 17px;
  font-weight: 500;
  line-height: 22px;
  color: #fff;
  transform: rotate(-45deg);
}

/* right panel */
.inspector {
  width: 916px;
  margin-left: 7px;
  display: flex;
  flex-direction: column;
  background-color: #fff;
}

.inspector-title {
  height: 112px;
  padding-left: 32px;
  font-size: 28px;
  line-height: 110px;
  letter-spacing: -0.08px;
}

.inspector-body {
  flex: 1;
  display: flex;
}

.resizer {
  width: 5px;
  height: 61px;
  margin: 977px 5px 0 6px;
  border-radius: 3px;
  background-color: #e6e7e8;
}

.inspector-content {
  flex: 1;
  padding: 36px 30px 0 14px;
  background-color: #ebecee;
}

.settings {
  height: 932px;
  padding: 28px 30px 0;
  border-radius: 18px;
  background-color: #fff;
  box-shadow: 0 2px 4px rgba(0, 0, 0, 0.16);
}

.settings-head {
  display: flex;
  align-items: center;
  justify-content: space-between;
  height: 50px;
  letter-spacing: 0.9px;
  color: #6f6f6f;
}

.settings-head svg {
  width: 24px;
  height: 14px;
  margin-right: 3px;
  fill: none;
  stroke: #8e8e8e;
  stroke-width: 2.4;
}

.segmented {
  display: flex;
  width: 640px;
  height: 64px;
  margin: 20px 0 52px 78px;
  padding: 4px;
  border-radius: 18px;
  background-color: #dddde0;
}

.seg {
  position: relative;
  width: 158px;
  line-height: 54px;
  letter-spacing: 0.18px;
  text-align: center;
}

.seg.on {
  width: 160px;
  margin-right: -2px;
  border-radius: 14px;
  background-color: #fff;
  font-weight: 700;
  box-shadow: 0 4px 8px rgba(0, 0, 0, 0.2);
}

/* separator between unselected segments */
.seg:not(.on) + .seg::before {
  content: "";
  position: absolute;
  left: -1px;
  top: 10px;
  width: 2px;
  height: 36px;
  background-color: #c5c5c9;
}

.option {
  display: flex;
  justify-content: space-between;
  padding: 19px 20px 21px 0;
  border-bottom: 2px solid #eceded;
}

.option.first {
  padding-top: 0;
}

.option.single {
  align-items: center;
  height: 128px;
  padding: 0 20px 0 0;
}

.option-title {
  font-size: 28px;
  line-height: 40px;
  letter-spacing: -0.1px;
}

.option-desc {
  font-size: 24px;
  line-height: 36px;
  letter-spacing: 0.56px;
  white-space: nowrap;
  color: #888;
}

.option:not(.first) .option-desc {
  margin-top: -2px;
}

.switch {
  position: relative;
  width: 78px;
  height: 40px;
  padding: 6px 5px;
  flex: none;
}

.option:not(.single) .switch {
  margin-top: 48px;
}

.switch::before {
  content: "";
  display: block;
  height: 28px;
  border-radius: 14px;
  background-color: #ababab;
}

.switch i {
  position: absolute;
  top: 0;
  left: 0;
  width: 40px;
  height: 40px;
  border-radius: 50%;
  background-color: #fafafa;
  box-shadow: 0 2px 5px rgba(0, 0, 0, 0.3);
}

.switch.on::before {
  background-color: #92aff5;
}

.switch.on i {
  left: 38px;
  background-color: #2563eb;
}

.note {
  display: flex;
  height: 178px;
  margin-top: 15px;
  padding: 21px 0 0 22px;
  background-color: #f0f0f3;
}

.note svg {
  flex: none;
  width: 32px;
  height: 32px;
  margin: 1px 18px 0 0;
  fill: none;
  stroke: #2563eb;
  stroke-width: 2.4;
}

.note .dot {
  fill: #2563eb;
  stroke: none;
}

.note p {
  font-size: 24px;
  line-height: 36px;
  letter-spacing: 0.53px;
  white-space: nowrap;
  color: #858585;
}

.note a {
  font-weight: 500;
  letter-spacing: 0.38px;
  color: #2563eb;
}

/* help bubble in the bottom right corner */
.help {
  position: absolute;
  right: -36px;
  bottom: -36px;
  width: 64px;
  height: 64px;
  border-radius: 50%;
  background-color: #1a1c1f;
}

.marks {
  position: absolute;
  top: 0;
  left: 0;
  width: 3584px;
  height: 2240px;
  fill: #ff0d00;
  fill-rule: evenodd;
}
```
